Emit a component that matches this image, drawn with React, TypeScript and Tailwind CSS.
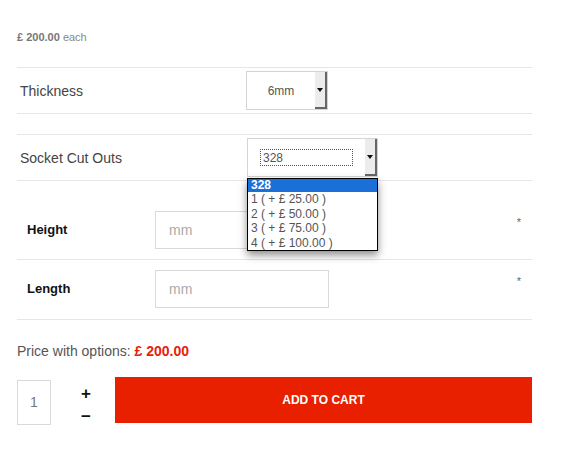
import React from 'react';

const options = ['1 ( + £ 25.00 )', '2 ( + £ 50.00 )', '3 ( + £ 75.00 )', '4 ( + £ 100.00 )'];

function SelectBox({ value, width, focused }: { value: string; width: string; focused?: boolean }) {
  return (
    <div className={`flex h-[39px] ${width} border border-[#d4d4d4] bg-white`}>
      <div className="flex flex-1 items-center justify-center px-[12px]">
        {focused ? (
          <div className="flex h-[17px] w-full items-center border border-dotted border-[#555] px-[2px] text-[12px] text-[#555]">
            {value}
          </div>
        ) : (
          <span className="text-[12px] text-[#555]">{value}</span>
        )}
      </div>
      <div className="flex w-[12px] items-center justify-center border-r-2 border-b-2 border-[#666] bg-[#ececec]">
        <svg width="6" height="4" viewBox="0 0 6 4">
          <path d="M0 0h6L3 4z" fill="#111" />
        </svg>
      </div>
    </div>
  );
}

function MmInput() {
  return (
    <div className="flex h-[38px] w-[174px] items-center border border-[#d9d9d9] bg-white pl-[13px] text-[14px] text-[#aaa]">
      mm
    </div>
  );
}

export default function App() {
  return (
    <div className="h-[474px] w-[587px] bg-white pl-[17px] pt-[30px] font-['Liberation_Sans',Arial,sans-serif]">
      <div className="w-[515px]">
        <p className="h-[14px] text-[11px] leading-[14px] text-[#888]">
          <b className="text-[#777]">£ 200.00</b> each
        </p>

        {/* Thickness */}
        <div className="mt-[23px] flex h-[47px] items-center border-y border-[#e6e6e6]">
          <div className="w-[229px] pl-[3px] pt-[2px] text-[14px] text-[#444]">Thickness</div>
          <SelectBox value="6mm" width="w-[82px]" />
        </div>

        {/* Socket cut outs */}
        <div className="relative mt-[20px] flex h-[47px] items-center border-y border-[#e6e6e6]">
          <div className="w-[230px] pl-[3px] pt-[2px] text-[14px] text-[#444]">Socket Cut Outs</div>
          <SelectBox value="328" width="w-[131px]" focused />
          <div className="absolute left-[230px] top-[43px] z-10 w-[131px] border border-black bg-white text-[12px] leading-[14.5px] text-[#555] shadow-[0_4px_8px_rgba(0,0,0,0.45)]">
            <div className="h-[13px] bg-[#1a6fd8] px-[3px] font-bold leading-[13px] text-white">328</div>
            {options.map((o) => (
              <div key={o} className="px-[3px]">
                {o}
              </div>
            ))}
          </div>
        </div>

        {/* Height */}
        <div className="flex border-b border-[#e6e6e6] pt-[30px] pb-[10px]">
          <div className="flex w-[138px] items-center pl-[10px] text-[13px] font-bold text-[#111]">Height</div>
          <MmInput />
          <div className="ml-auto mr-[11px] mt-[3px] text-[11px] text-[#666]">*</div>
        </div>

        {/* Length */}
        <div className="flex border-b border-[#e6e6e6] pt-[10px] pb-[11px]">
          <div className="flex w-[138px] items-center pl-[10px] text-[13px] font-bold text-[#111]">Length</div>
          <MmInput />
          <div className="ml-auto mr-[11px] mt-[3px] text-[11px] text-[#666]">*</div>
        </div>

        <p className="mt-[23px] text-[14px] leading-[16px] text-[#555]">
          Price with options: <b className="text-[#e8200a]">£ 200.00</b>
        </p>

        <div className="mt-[18px] flex items-start">
          <div className="mt-[3px] flex h-[45px] w-[34px] items-center justify-center border border-[#d9d9d9] text-[14px] text-[#777]">
            1
          </div>
          <div className="ml-[27px] mt-[5px] flex w-[16px] flex-col items-center text-[17px] font-bold leading-[23px] text-[#111]">
            <span>+</span>
            <span>−</span>
          </div>
          <button className="ml-[21px] flex h-[46px] w-[417px] items-center justify-center bg-[#e82000] text-[12px] font-bold uppercase text-white">
            Add to cart
          </button>
        </div>
      </div>
    </div>
  );
}
